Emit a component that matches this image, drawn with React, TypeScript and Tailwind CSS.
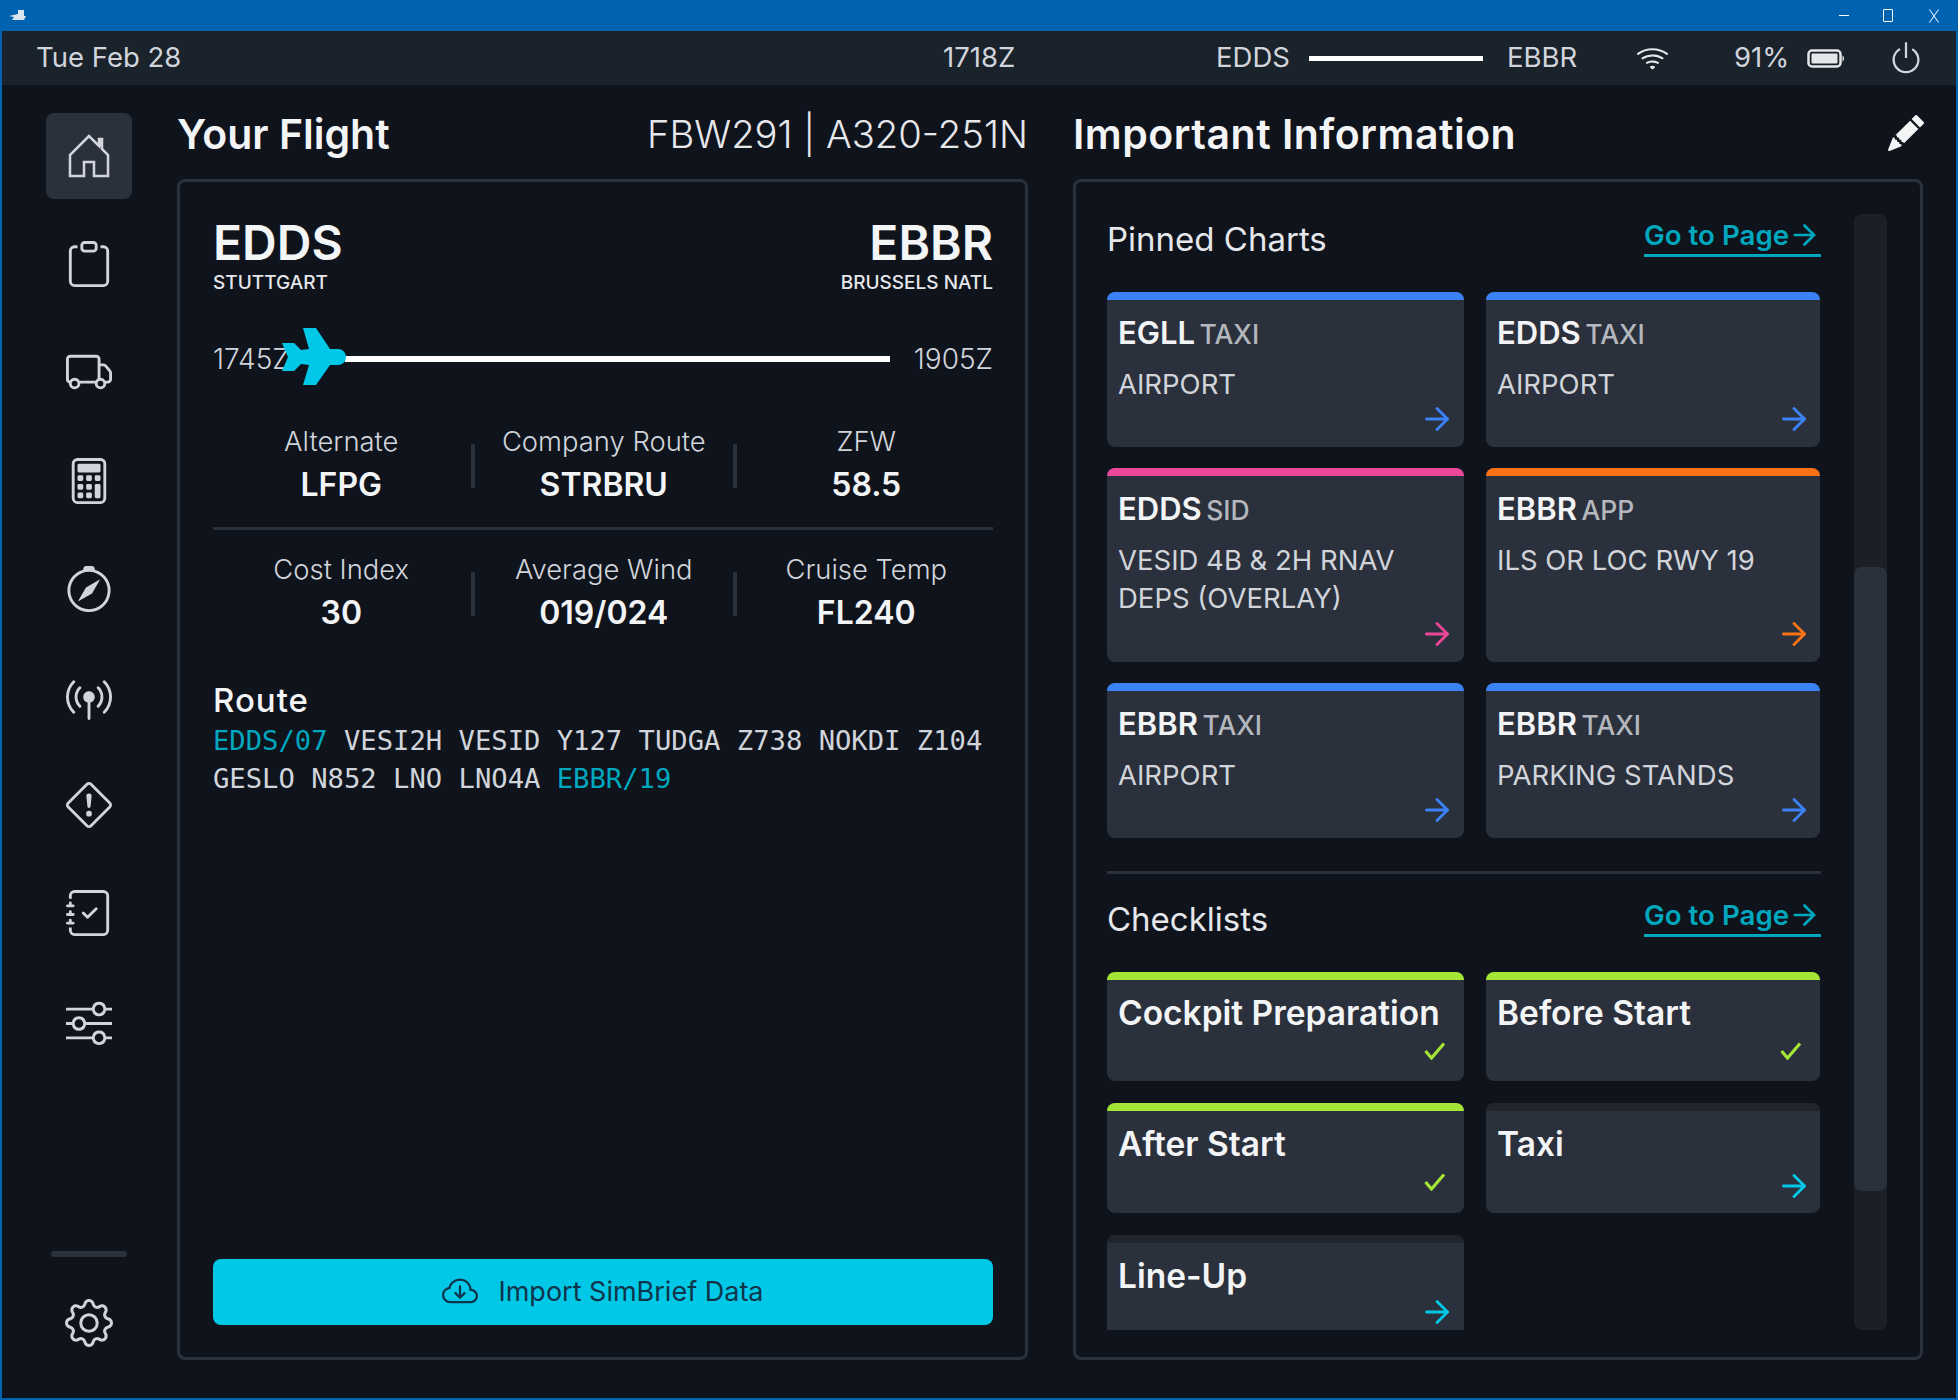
import React from "react";
import {
  BsClipboard, BsTruck, BsCalculator, BsCompass, BsBroadcastPin,
  BsExclamationDiamond, BsJournalCheck, BsSliders, BsGear, BsWifi, BsPower,
  BsPencilFill, BsCloudArrowDown,
} from "react-icons/bs";
import { ArrowRight } from "lucide-react";

const sans = "font-['Inter','Noto_Sans',sans-serif]";

function Plane() {
  return (
    <svg width="64" height="57" viewBox="0 0 64 57" className="absolute left-[-63px] top-[-28px]">
      <path
        d="M0 15 L12 15 L19 22 L27 21 L21 0 L34 0 L48 21 L56 21 C61 21 64 25 64 29 C64 33 61 37 56 37 L48 37 L34 57 L21 57 L27 37 L19 36 L12 43 L0 43 L6 29 Z"
        fill="#00c8e6"
      />
    </svg>
  );
}

function HomeIcon() {
  return (
    <svg width="42" height="44" viewBox="0 0 42 44" fill="none" stroke="#d1d5db" strokeWidth="2.5" strokeLinejoin="miter">
      <path d="M21 2 L2 21 L2 42 L16 42 L16 28 L26 28 L26 42 L40 42 L40 21 L34 15 L34 5 L31 5 L31 12 Z" />
      <path d="M32.5 6 L32.5 13" strokeWidth="4" />
    </svg>
  );
}

function Stat({ label, value }: { label: string; value: string }) {
  return (
    <div className="flex flex-col items-center w-[262.5px] shrink-0">
      <span className="text-[27.4px] leading-[38px] font-light text-[#d1d5db]">{label}</span>
      <span className="text-[32px] leading-[44px] font-semibold text-[#f3f4f6] mt-[3px]">{value}</span>
    </div>
  );
}

function StatRow({ items }: { items: [string, string][] }) {
  return (
    <div className="flex items-center ml-[-3px]">
      {items.map(([l, v], i) => (
        <React.Fragment key={l}>
          {i > 0 && <div className="w-[4px] h-[44px] shrink-0 bg-[#2b313c] mt-[3px] mx-[-2px] z-10" />}
          <Stat label={l} value={v} />
        </React.Fragment>
      ))}
    </div>
  );
}

function ChartCard({ icao, type, name, bar, arrow, h }: { icao: string; type: string; name: React.ReactNode; bar: string; arrow: string; h: string }) {
  return (
    <div className={`relative flex flex-col bg-[#2b313c] rounded-lg overflow-hidden ${h}`}>
      <div className={`h-[8px] ${bar}`} />
      <div className="pl-[11px] pt-[14px]">
        <div className="leading-[38px] text-[#f3f4f6] whitespace-nowrap">
          <span className="text-[31px] font-semibold">{icao}</span>{" "}
          <span className="text-[26.5px] font-medium text-[#b4b8be]">{type}</span>
        </div>
        <div className="text-[27.5px] leading-[38px] text-[#d1d5db] mt-[8px]">{name}</div>
      </div>
      <ArrowRight size={36} strokeWidth={1.9} className={`absolute right-[8.5px] bottom-[10px] ${arrow}`} />
    </div>
  );
}

function Check({ className }: { className: string }) {
  return (
    <svg width="22" height="18" viewBox="0 0 22 18" fill="none" className={className}>
      <path d="M1.5 9 L7.5 16 L20 1.5" stroke="#a3e635" strokeWidth="3.2" />
    </svg>
  );
}

function ChecklistCard({ name, bar, done, h, arrowTop }: { name: string; bar: string; done: boolean; h: string; arrowTop?: string }) {
  return (
    <div className={`relative bg-[#2b313c] ${h}`}>
      <div className={`h-[8px] rounded-t-lg ${bar}`} />
      <div className="pl-[11px] pt-[12px] text-[33.5px] leading-[42px] font-semibold text-[#f3f4f6] whitespace-nowrap">{name}</div>
      {done ? (
        <Check className="absolute right-[18px] top-[70px]" />
      ) : (
        <ArrowRight size={36} strokeWidth={1.9} className={`absolute right-[8.5px] text-[#00c8e6] ${arrowTop}`} />
      )}
    </div>
  );
}

function SectionHead({ title }: { title: string }) {
  return (
    <div className="flex justify-between items-start">
      <span className="text-[33px] leading-[44px] text-[#e5e7eb] mt-[3px]">{title}</span>
      <span className="flex items-center w-[177px] h-[43px] pt-[2px] border-b-[3px] border-[#00a8bf] text-[#00a8bf] text-[27.7px] font-semibold leading-[38px] whitespace-nowrap">
        Go to Page
        <ArrowRight size={36} strokeWidth={2} className="ml-[-1px]" />
      </span>
    </div>
  );
}

const navIcons = [BsClipboard, BsTruck, BsCalculator, BsCompass, BsBroadcastPin, BsExclamationDiamond, BsJournalCheck, BsSliders];

export default function App() {
  return (
    <div className={`w-[1958px] h-[1400px] flex flex-col bg-[#0f131c] ${sans} overflow-hidden`}>
      {/* Window title bar */}
      <div className="h-[31px] shrink-0 bg-[#0063b1] flex items-center justify-between pl-[9px] pr-[19px]">
        <svg width="17" height="11" viewBox="0 0 17 11">
          <path d="M0 6 L9 4 L9 0 L15 0 L15 6 L17 6 L15 10 L3 10 L5 7 Z" fill="#dbe4ee" />
        </svg>
        <div className="flex items-center text-white">
          <div className="w-[10px] h-[1px] bg-white" />
          <div className="w-[10px] h-[13px] border border-white ml-[34px] rounded-[1px]" />
          <svg width="10" height="14" viewBox="0 0 10 14" className="ml-[36px]">
            <path d="M0.5 0.5 L9.5 13.5 M9.5 0.5 L0.5 13.5" stroke="#fff" strokeWidth="1" />
          </svg>
        </div>
      </div>

      <div className="flex-1 flex flex-col border-x-2 border-b-2 border-[#0063b1] min-h-0">
        {/* Status bar */}
        <div className="h-[54px] shrink-0 bg-[#1a222b] flex items-center pl-[34px] text-[27.5px] text-[#d1d5db]">
          <span className="w-[907px]">Tue Feb 28</span>
          <span className="w-[273px]">1718Z</span>
          <span className="w-[93px]">EDDS</span>
          <div className="w-[174px] h-[5px] bg-white" />
          <span className="ml-[24px] w-[129px]">EBBR</span>
          <BsWifi size={33} className="text-[#e5e7eb]" />
          <span className="ml-[65px] w-[73px]">91%</span>
          <svg width="38" height="19" viewBox="0 0 38 19" className="shrink-0">
            <rect x="1.5" y="1.5" width="32" height="16" rx="3.5" fill="none" stroke="#e5e7eb" strokeWidth="2.5" />
            <rect x="4.5" y="4.5" width="26" height="10" rx="1" fill="#e5e7eb" />
            <path d="M35.5 6.5 C37.5 7 37.5 12 35.5 12.5 Z" fill="#e5e7eb" />
          </svg>
          <BsPower size={36} className="ml-[43px] text-[#d1d5db]" />
        </div>

        <div className="flex-1 flex min-h-0">
          {/* Sidebar */}
          <div className="w-[175px] shrink-0 flex flex-col items-center pl-[2px] pr-[1px] pt-[28px] pb-[32px]">
            <div className="flex flex-col gap-[22.2px] pr-[3px]">
              <div className="w-[86px] h-[86px] rounded-lg bg-[#2b313c] flex items-center justify-center">
                <HomeIcon />
              </div>
              {navIcons.map((Icon, i) => (
                <div key={i} className="w-[86px] h-[86px] flex items-center justify-center">
                  <Icon size={46} className="text-[#d1d5db]" />
                </div>
              ))}
            </div>
            <div className="mt-auto w-[76px] h-[6px] rounded-full bg-[#2b313c] mr-[3px]" />
            <div className="mt-[23px] w-[86px] h-[86px] flex items-center justify-center mr-[3px]">
              <BsGear size={48} className="text-[#d1d5db]" />
            </div>
          </div>

          {/* Main */}
          <div className="flex-1 flex gap-[45px] pt-[16px] pr-[33px] pb-[38px] min-w-0">
            {/* Left */}
            <div className="w-[851px] flex flex-col">
              <div className="h-[78px] flex justify-between items-start">
                <h1 className="text-[41px] leading-[66px] font-semibold text-[#f3f4f6]">Your Flight</h1>
                <span className="text-[38.2px] leading-[66px] font-light text-[#e5e7eb]">FBW291 | A320-251N</span>
              </div>
              <div className="flex-1 border-[3px] border-[#2b313c] rounded-lg pl-[33px] pr-[32px] pt-[33px] pb-[32px] flex flex-col">
                <div className="flex justify-between">
                  <div>
                    <div className="text-[48px] leading-[56px] font-semibold text-[#f3f4f6]">EDDS</div>
                    <div className="text-[19px] leading-[24px] font-medium text-[#e5e7eb]">STUTTGART</div>
                  </div>
                  <div className="text-right">
                    <div className="text-[48px] leading-[56px] font-semibold text-[#f3f4f6]">EBBR</div>
                    <div className="text-[19px] leading-[24px] font-medium text-[#e5e7eb]">BRUSSELS NATL</div>
                  </div>
                </div>
                <div className="flex items-center mt-[46px] text-[28px] leading-[36px] text-[#d1d5db] font-light">
                  <span className="w-[80px]">1745Z</span>
                  <div className="relative ml-[52px] flex-1 h-[6px] bg-white">
                    <Plane />
                  </div>
                  <span className="ml-[24px]">1905Z</span>
                </div>
                <div className="mt-[45px]">
                  <StatRow items={[["Alternate", "LFPG"], ["Company Route", "STRBRU"], ["ZFW", "58.5"]]} />
                </div>
                <div className="h-[3px] bg-[#2b313c] mt-[20px]" />
                <div className="mt-[20px] mb-[1px]">
                  <StatRow items={[["Cost Index", "30"], ["Average Wind", "019/024"], ["Cruise Temp", "FL240"]]} />
                </div>
                <div className="text-[33px] tracking-[1px] leading-[40px] font-medium text-[#f3f4f6] mt-[44px]">Route</div>
                <div className="font-['DejaVu_Sans_Mono',monospace] text-[27.2px] leading-[38px] text-[#d1d5db] mt-[2px]">
                  <span className="text-[#00a8bf]">EDDS/07</span> VESI2H VESID Y127 TUDGA Z738 NOKDI Z104
                  <br />
                  GESLO N852 LNO LNO4A <span className="text-[#00a8bf]">EBBR/19</span>
                </div>
                <div className="mt-auto h-[66px] rounded-lg bg-[#00c8e6] flex items-center justify-center gap-[20px] text-[#10344a] text-[27px]">
                  <BsCloudArrowDown size={36} />
                  <span>Import SimBrief Data</span>
                </div>
              </div>
            </div>

            {/* Right */}
            <div className="w-[850px] flex flex-col">
              <div className="h-[78px] flex justify-between items-start">
                <h1 className="text-[41px] tracking-[0.5px] leading-[66px] font-semibold text-[#f3f4f6]">Important Information</h1>
                <BsPencilFill size={36} className="text-[#f3f4f6] mt-[14px] mr-[-1px]" />
              </div>
              <div className="flex-1 border-[3px] border-[#2b313c] rounded-lg pl-[31px] pr-[33px] pt-[32px] pb-[27px] flex gap-[33px] min-h-0">
                <div className="w-[714px] overflow-hidden">
                  <SectionHead title="Pinned Charts" />
                  <div className="grid grid-cols-[356.5px_334px] gap-x-[22.5px] gap-y-[21px] mt-[31px]">
                    <ChartCard icao="EGLL" type="TAXI" name="AIRPORT" bar="bg-[#3b82f6]" arrow="text-[#3b82f6]" h="h-[155px]" />
                    <ChartCard icao="EDDS" type="TAXI" name="AIRPORT" bar="bg-[#3b82f6]" arrow="text-[#3b82f6]" h="h-[155px]" />
                    <ChartCard icao="EDDS" type="SID" name={<>VESID 4B &amp; 2H RNAV<br />DEPS (OVERLAY)</>} bar="bg-[#ec4899]" arrow="text-[#ec4899]" h="h-[194px]" />
                    <ChartCard icao="EBBR" type="APP" name="ILS OR LOC RWY 19" bar="bg-[#f97316]" arrow="text-[#f97316]" h="h-[194px]" />
                    <ChartCard icao="EBBR" type="TAXI" name="AIRPORT" bar="bg-[#3b82f6]" arrow="text-[#3b82f6]" h="h-[155px]" />
                    <ChartCard icao="EBBR" type="TAXI" name="PARKING STANDS" bar="bg-[#3b82f6]" arrow="text-[#3b82f6]" h="h-[155px]" />
                  </div>
                  <div className="h-[3px] bg-[#2b313c] mt-[33px] mb-[20px]" />
                  <SectionHead title="Checklists" />
                  <div className="grid grid-cols-[356.5px_334px] gap-x-[22.5px] gap-y-[22px] mt-[31px]">
                    <ChecklistCard name="Cockpit Preparation" bar="bg-[#a3e635]" done h="h-[109px] rounded-lg" />
                    <ChecklistCard name="Before Start" bar="bg-[#a3e635]" done h="h-[109px] rounded-lg" />
                    <ChecklistCard name="After Start" bar="bg-[#a3e635]" done h="h-[110px] rounded-lg" />
                    <ChecklistCard name="Taxi" bar="bg-[#1f242d]" done={false} h="h-[110px] rounded-lg" arrowTop="top-[65px]" />
                    <ChecklistCard name="Line-Up" bar="bg-[#1f242d]" done={false} h="h-[110px] rounded-t-lg" arrowTop="top-[59px]" />
                  </div>
                </div>
                <div className="w-[33px] rounded-lg bg-[#1a1f28] pt-[353px] pb-[139px]">
                  <div className="h-full rounded-lg bg-[#2b313c]" />
                </div>
              </div>
            </div>
          </div>
        </div>
      </div>
    </div>
  );
}
